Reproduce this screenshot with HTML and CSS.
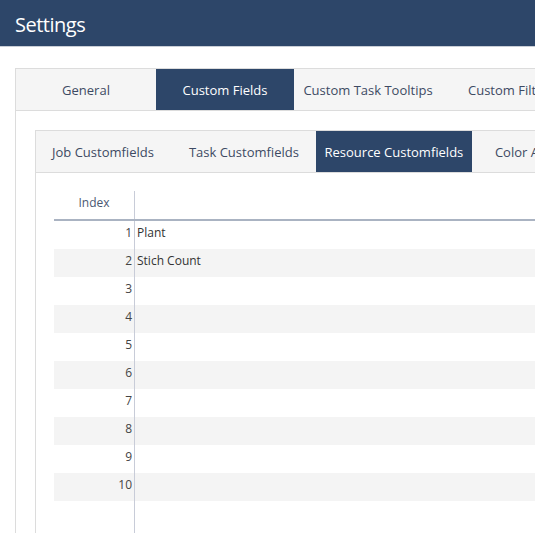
FILE: index.html
```html
<!DOCTYPE html>
<html>
<head>
<meta charset="utf-8">
<link rel="stylesheet" href="styles.css">
</head>
<body>
<header class="topbar">Settings</header>
<main class="main">
  <section class="box outer">
    <nav class="tabs">
      <div class="tab t-general">General</div>
      <div class="tab t-fields active">Custom Fields</div>
      <div class="tab t-tooltips">Custom Task Tooltips</div>
      <div class="tab t-filters">Custom Filters</div>
    </nav>
    <div class="outer-body">
      <section class="box inner">
        <nav class="tabs subtabs">
          <div class="subtab s-job">Job Customfields</div>
          <div class="subtab">Task Customfields</div>
          <div class="subtab active s-resource">Resource Customfields</div>
          <div class="subtab s-color">Color Assignments</div>
        </nav>
        <div class="inner-body">
          <div class="grid">
            <div class="row head"><div class="idx">Index</div><div class="val"></div></div>
            <div class="row"><div class="idx">1</div><div class="val">Plant</div></div>
            <div class="row alt"><div class="idx">2</div><div class="val">Stich Count</div></div>
            <div class="row"><div class="idx">3</div><div class="val"></div></div>
            <div class="row alt"><div class="idx">4</div><div class="val"></div></div>
            <div class="row"><div class="idx">5</div><div class="val"></div></div>
            <div class="row alt"><div class="idx">6</div><div class="val"></div></div>
            <div class="row"><div class="idx">7</div><div class="val"></div></div>
            <div class="row alt"><div class="idx">8</div><div class="val"></div></div>
            <div class="row"><div class="idx">9</div><div class="val"></div></div>
            <div class="row alt"><div class="idx">10</div><div class="val"></div></div>
            <div class="row filler"><div class="idx"></div><div class="val"></div></div>
          </div>
        </div>
      </section>
    </div>
  </section>
</main>
</body>
</html>
```
FILE: styles.css
```css
html, body {
  margin: 0;
  padding: 0;
  overflow: hidden;
  height: 533px;
  background: #ffffff;
  font-family: "Open Sans", "Noto Sans", sans-serif;
}
.topbar {
  box-sizing: border-box;
  height: 47px;
  padding: 3px 0 0 15px;
  line-height: 43px;
  background: #2d4669;
  color: #ffffff;
  font-size: 20px;
  letter-spacing: -0.5px;
  border-bottom: 1px solid #c9ced6;
}
.main {
  padding: 21px 0 0 15px;
}
.box {
  border: 1px solid #dcdcdc;
  border-right: none;
}
.outer {
  width: 760px;
  border-bottom: none;
}
.tabs {
  display: flex;
  height: 41px;
  background: #f5f5f5;
  border-bottom: 1px solid #dcdcdc;
}
.tab {
  display: flex;
  align-items: center;
  justify-content: center;
  font-size: 13px;
  color: #3d4a63;
  white-space: nowrap;
  flex: none;
}
.t-general { width: 140px; }
.t-fields { width: 138px; }
.t-tooltips { width: 148px; }
.t-filters { padding: 0 26px; }
.outer-body {
  padding: 19px 0 0 19px;
}
.inner {
  border-bottom: none;
}
.subtab {
  display: flex;
  align-items: center;
  padding: 0 17px 0 18px;
  font-size: 13px;
  color: #3d4a63;
  white-space: nowrap;
  flex: none;
}
.s-job {
  padding-left: 16px;
}
.s-resource {
  width: 156px;
  padding: 0;
  justify-content: center;
}
.s-color {
  padding-left: 23px;
}
.tab.active,
.subtab.active {
  background: #2d4669;
  color: #ffffff;
}
.inner-body {
  padding: 18px 0 0 18px;
}
.grid {
  display: flex;
  flex-direction: column;
  font-size: 12px;
  color: #333333;
}
.row {
  display: flex;
  height: 28px;
}
.row.alt {
  background: #f4f4f4;
}
.row.head {
  border-bottom: 2px solid #aab3c2;
}
.row.filler {
  height: 40px;
}
.idx {
  box-sizing: border-box;
  width: 81px;
  padding: 0 2px 5px 0;
  border-right: 1px solid #c8ccd8;
  display: flex;
  align-items: center;
  justify-content: flex-end;
  color: #444444;
}
.head .idx {
  justify-content: center;
  padding-right: 0;
  color: #4a5872;
}
.val {
  flex: 1;
  display: flex;
  align-items: center;
  padding: 0 0 5px 2px;
}
```
